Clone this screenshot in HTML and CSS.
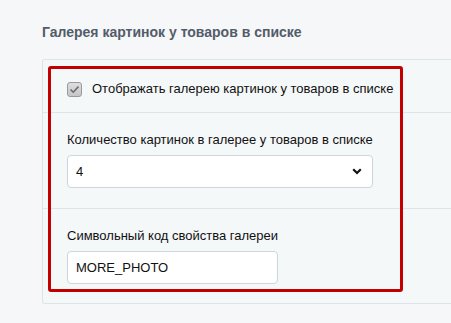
FILE: index.html
```html
<!DOCTYPE html>
<html lang="ru">
<head>
<meta charset="utf-8">
<link rel="stylesheet" href="styles.css">
</head>
<body>
<div class="page">
  <h2 class="title">Галерея картинок у товаров в списке</h2>
  <div class="panel">
    <div class="row row-check">
      <label class="check">
        <span class="box"><svg width="11" height="9" viewBox="0 0 11 9"><path d="M1.5 4.5 L4.2 7.2 L9.5 1.6" fill="none" stroke="#6b6b6b" stroke-width="1.6"/></svg></span>
        <span>Отображать галерею картинок у товаров в списке</span>
      </label>
    </div>
    <div class="row">
      <div class="label">Количество картинок в галерее у товаров в списке</div>
      <div class="select">
        <span>4</span>
        <svg class="chev" width="10" height="7" viewBox="0 0 10 7"><path d="M1.2 1.3 L5 5 L8.8 1.3" fill="none" stroke="#111" stroke-width="2.2"/></svg>
      </div>
    </div>
    <div class="row row-last">
      <div class="label">Символьный код свойства галереи</div>
      <div class="input">MORE_PHOTO</div>
    </div>
    <div class="highlight"></div>
  </div>
</div>
</body>
</html>
```
FILE: styles.css
```css
html, body {
  margin: 0;
  padding: 0;
}
body {
  background: #f5f7f8;
  font-family: "Liberation Sans", Arial, sans-serif;
  color: #111;
  width: 451px;
  height: 323px;
  overflow: hidden;
}
.page {
  padding: 24px 0 0 42px;
}
.title {
  margin: 0;
  font-size: 14px;
  font-weight: bold;
  color: #535c69;
  line-height: 16px;
  height: 19px;
  margin-bottom: 16px;
}
.panel {
  position: relative;
  border: 1px solid #dde5ea;
  border-right: none;
  border-radius: 3px 0 0 3px;
  background: #f5f8f9;
}
.row {
  padding: 19px 0 20px 24px;
  border-bottom: 1px solid #dde5ea;
}
.row-last {
  border-bottom: none;
  padding-bottom: 19px;
}
.row-check {
  padding: 21px 0 16px 24px;
  height: 15px;
}
.check {
  display: flex;
  align-items: center;
  gap: 10px;
  font-size: 13px;
  line-height: 16px;
  color: #111;
}
.box {
  width: 13px;
  height: 13px;
  border: 1px solid #9a9a9a;
  border-radius: 3px;
  background: linear-gradient(#dedede, #c6c6c6);
  display: flex;
  align-items: center;
  justify-content: center;
}
.label {
  font-size: 13px;
  line-height: 16px;
  margin-bottom: 7px;
  color: #111;
}
.select {
  width: 288px;
  height: 31px;
  border: 1px solid #cdd6dd;
  border-radius: 4px;
  background: #fff;
  display: flex;
  align-items: center;
  justify-content: space-between;
  padding: 0 8px 0 8px;
  font-size: 13px;
}
.chev {
  margin-right: 2px;
}
.input {
  width: 193px;
  height: 31px;
  border: 1px solid #cdd6dd;
  border-radius: 4px;
  background: #fff;
  display: flex;
  align-items: center;
  padding: 0 8px 0 8px;
  font-size: 13px;
}
.highlight {
  position: absolute;
  left: 5px;
  top: 6px;
  width: 349px;
  height: 220px;
  border: 3px solid #c30000;
  border-radius: 3px;
}
```
